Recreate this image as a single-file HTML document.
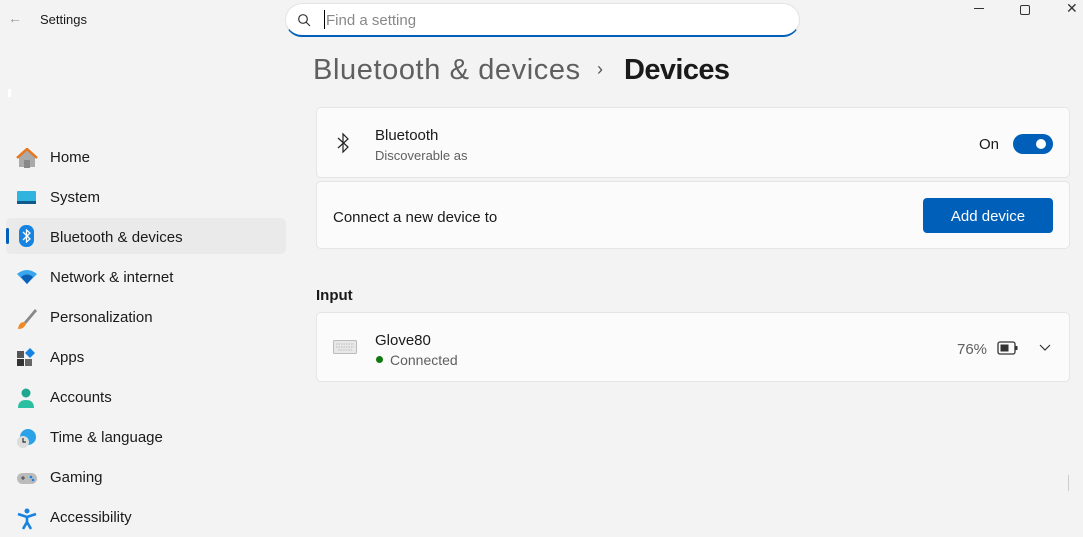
<!DOCTYPE html>
<html><head><meta charset="utf-8"><style>
*{box-sizing:border-box;margin:0;padding:0}
body{width:1083px;height:537px;background:#f3f3f3;font-family:"Liberation Sans",sans-serif;color:#1a1a1a;position:relative;overflow:hidden}
.abs{position:absolute}
.nav{position:absolute;left:6px;width:280px;height:36px;border-radius:5px;font-size:15px;line-height:36px;padding-left:44px}
.nav svg{position:absolute;left:10px;top:8px}
.card{position:absolute;left:316px;width:754px;background:#fbfbfb;border:1px solid #e5e5e5;border-radius:5px}
</style></head><body>
<div class="abs" style="left:8px;top:10px;color:#999;font-size:14px">←</div>
<div class="abs" style="left:40px;top:12px;font-size:13px">Settings</div>
<div class="abs" style="left:8px;top:89px;width:3px;height:8px;background:#fff"></div>
<div class="abs" style="left:285px;top:3px;width:515px;height:34px;background:#fff;border:1px solid #e3e3e3;border-bottom:2px solid #005fb8;border-radius:17px"></div>
<svg class="abs" style="left:297px;top:13px" width="14" height="14" viewBox="0 0 14 14"><circle cx="6" cy="6" r="4.3" fill="none" stroke="#333" stroke-width="1.2"/><path d="M9 9l4 4" stroke="#333" stroke-width="1.2"/></svg>
<div class="abs" style="left:324px;top:10px;width:1px;height:19px;background:#000"></div>
<div class="abs" style="left:326px;top:12px;font-size:15px;color:#888">Find a setting</div>
<div class="abs" style="left:974px;top:8px;width:10px;height:1px;background:#333"></div>
<div class="abs" style="left:1020px;top:5px;width:10px;height:10px;border:1px solid #333;border-radius:2px"></div>
<div class="abs" style="left:1066px;top:0;font-size:14px;color:#333">✕</div>
<div class="abs" style="left:313px;top:54px;font-size:29px;color:#5f5f5f;letter-spacing:0.6px">Bluetooth &amp; devices</div>
<div class="abs" style="left:597px;top:59px;font-size:18px;color:#555">›</div>
<div class="abs" style="left:624px;top:54px;font-size:29px;font-weight:bold;color:#1a1a1a;letter-spacing:-0.6px">Devices</div>

<div class="nav" style="top:140px"><svg width="22" height="20" viewBox="0 0 22 20"><path d="M3 9L11 2l8 7v10H3z" fill="#aaa"/><path d="M1 10L11 1l10 9" fill="none" stroke="#e8761d" stroke-width="2.5"/><rect x="8" y="12" width="6" height="8" fill="#888"/></svg>Home</div>
<div class="nav" style="top:180px"><svg width="22" height="20" viewBox="0 0 22 20"><rect x="1" y="3" width="19" height="13" rx="1" fill="#2fb4e0"/><rect x="1" y="13" width="19" height="3" fill="#0f5a8a"/></svg>System</div>
<div class="nav" style="top:218px;height:36px;background:#eaeaea;line-height:40px"><div class="abs" style="left:0;top:10px;width:3px;height:16px;background:#005fb8;border-radius:2px"></div><svg width="22" height="22" viewBox="0 0 22 22" style="top:7px"><rect x="3" y="0" width="15" height="22" rx="7" fill="#1683e0"/><path d="M7 7l7 7-3.5 3V5L14 8l-7 7" fill="none" stroke="#fff" stroke-width="1.3"/></svg>Bluetooth &amp; devices</div>
<div class="nav" style="top:260px"><svg width="22" height="20" viewBox="0 0 22 20"><path d="M1 6Q11-2 21 6L11 16z" fill="#39a6ee"/><path d="M5 9Q11 4 17 9L11 16z" fill="#0a5fb5"/></svg>Network &amp; internet</div>
<div class="nav" style="top:300px"><svg width="22" height="22" viewBox="0 0 22 22"><path d="M19 1L8 14l2 2L21 3z" fill="#888"/><path d="M8 14q-5 0-6 7q6 0 8-5z" fill="#f08a24"/></svg>Personalization</div>
<div class="nav" style="top:340px"><svg width="22" height="20" viewBox="0 0 22 20"><rect x="1" y="3" width="7" height="7" fill="#555"/><rect x="1" y="11" width="7" height="7" fill="#333"/><rect x="9" y="11" width="7" height="7" fill="#666"/><path d="M14 0l5 5-5 5-5-5z" fill="#1683e0"/></svg>Apps</div>
<div class="nav" style="top:380px"><svg width="22" height="22" viewBox="0 0 22 22"><circle cx="10" cy="5" r="4.5" fill="#1fa890"/><path d="M2 20q0-8 8-8t8 8z" fill="#29bfa0"/></svg>Accounts</div>
<div class="nav" style="top:420px"><svg width="22" height="22" viewBox="0 0 22 22"><circle cx="12" cy="9" r="8" fill="#29a2e8"/><circle cx="7" cy="14" r="6" fill="#ddd"/><path d="M7 10v4h3" fill="none" stroke="#333" stroke-width="1.2"/></svg>Time &amp; language</div>
<div class="nav" style="top:460px"><svg width="22" height="20" viewBox="0 0 22 20"><rect x="1" y="5" width="20" height="11" rx="5.5" fill="#bbb"/><path d="M5 10h4M7 8v4" stroke="#444"/><circle cx="15" cy="9" r="1.3" fill="#1683e0"/><circle cx="17" cy="12" r="1.3" fill="#1683e0"/></svg>Gaming</div>
<div class="nav" style="top:500px"><svg width="22" height="22" viewBox="0 0 22 22"><circle cx="11" cy="3" r="2.5" fill="#1683e0"/><path d="M2 6l9 3 9-3M11 9v5l-4 7M11 14l4 7" fill="none" stroke="#1683e0" stroke-width="2.6"/></svg>Accessibility</div>

<div class="card" style="top:107px;height:71px">
<svg class="abs" style="left:19px;top:24px" width="14" height="22" viewBox="0 0 14 22"><path d="M2 6l10 9-5 5V2l5 5-10 9" fill="none" stroke="#222" stroke-width="1.2"/></svg>
<div class="abs" style="left:58px;top:19px;font-size:15px">Bluetooth</div>
<div class="abs" style="left:58px;top:40px;font-size:13px;color:#5f5f5f">Discoverable as</div>
<div class="abs" style="left:662px;top:28px;font-size:15px">On</div>
<div class="abs" style="left:696px;top:26px;width:40px;height:20px;border-radius:10px;background:#005fb8"><div class="abs" style="left:23px;top:5px;width:10px;height:10px;border-radius:5px;background:#fff"></div></div>
</div>
<div class="card" style="top:181px;height:68px">
<div class="abs" style="left:16px;top:27px;font-size:15px">Connect a new device to</div>
<div class="abs" style="left:606px;top:16px;width:130px;height:35px;background:#005fb8;border-radius:4px;color:#fff;font-size:15px;text-align:center;line-height:37px">Add device</div>
</div>
<div class="abs" style="left:316px;top:287px;font-size:15px;font-weight:bold;color:#1a1a1a">Input</div>
<div class="card" style="top:312px;height:70px">
<svg class="abs" style="left:16px;top:27px" width="24" height="14" viewBox="0 0 24 14"><rect x="0.5" y="0.5" width="23" height="13" rx="1" fill="#e8e8e8" stroke="#bbb"/><path d="M3 4h18M3 7h18M5 10h14" stroke="#bbb" stroke-dasharray="1.5 1"/></svg>
<div class="abs" style="left:58px;top:19px;font-size:15px">Glove80</div>
<div class="abs" style="left:59px;top:43px;width:7px;height:7px;border-radius:4px;background:#0f7b0f"></div>
<div class="abs" style="left:73px;top:39px;font-size:14px;color:#5f5f5f">Connected</div>
<div class="abs" style="left:640px;top:28px;font-size:15px;color:#5f5f5f">76%</div>
<svg class="abs" style="left:680px;top:28px" width="22" height="14" viewBox="0 0 22 14"><rect x="1" y="1" width="17" height="12" rx="2" fill="none" stroke="#333" stroke-width="1.3"/><rect x="3.5" y="3.5" width="8" height="7" fill="#333"/><rect x="18.5" y="5" width="2" height="4" fill="#333"/></svg>
<svg class="abs" style="left:722px;top:31px" width="12" height="8" viewBox="0 0 12 8"><path d="M1 1l5 5 5-5" fill="none" stroke="#333" stroke-width="1.2"/></svg>
</div>
<div class="abs" style="left:1068px;top:475px;width:1px;height:16px;background:#ccc"></div>
</body></html>
